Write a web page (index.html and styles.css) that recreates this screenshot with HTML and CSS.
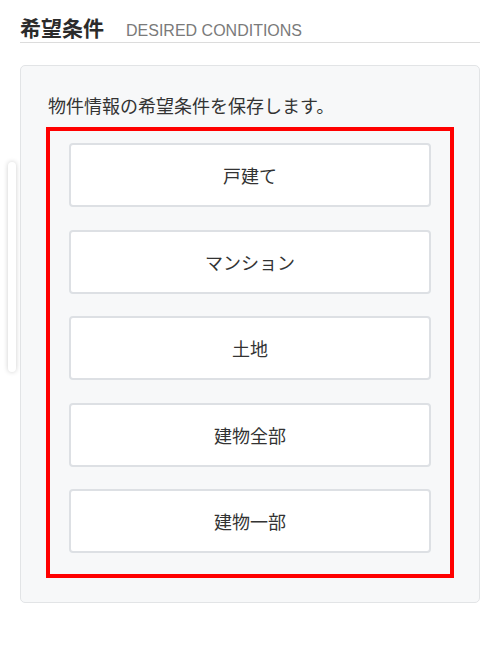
FILE: index.html
```html
<!DOCTYPE html>
<html lang="ja">

<head>
    <meta charset="UTF-8">
    <meta name="viewport" content="width=device-width, initial-scale=1.0">
    <title>希望条件</title>
    <link rel="stylesheet" href="styles.css">
</head>

<body>
    <h2 class="section-title">
        <span class="title-ja">希望条件</span>
        <span class="title-en">DESIRED CONDITIONS</span>
    </h2>

    <div class="card">
        <p class="card-text">物件情報の希望条件を保存します。</p>
        <div class="choice-list">
            <button class="choice">戸建て</button>
            <button class="choice">マンション</button>
            <button class="choice">土地</button>
            <button class="choice">建物全部</button>
            <button class="choice">建物一部</button>
        </div>
    </div>

    <div class="scroll-thumb"></div>
</body>

</html>
```

FILE: styles.css
```css
body {
    font-family: "Liberation Sans", "Noto Sans CJK JP", sans-serif;
    color: #333;
    background: #fff;
    margin: 0;
    padding: 16px 20px 0;
}

.section-title {
    display: flex;
    align-items: baseline;
    gap: 22px;
    height: 26px;
    margin: 0;
    border-bottom: 1px solid #dcdcdc;
    line-height: 26px;
}

.title-ja {
    font-size: 21px;
    font-weight: bold;
    color: #2b2b2b;
}

.title-en {
    font-size: 16px;
    font-weight: normal;
    color: #7a7a7a;
}

.card {
    margin-top: 22px;
    padding: 29px 25px 24px;
    background: #f7f8f9;
    border: 1px solid #e2e4e6;
    border-radius: 5px;
}

.card-text {
    margin: 0 0 8px;
    padding-left: 2px;
    font-size: 18px;
    line-height: 24px;
}

.choice-list {
    display: flex;
    flex-direction: column;
    gap: 22.5px;
    padding: 12px 19px 21px;
    border: 4px solid #ff0000;
}

.choice {
    height: 64px;
    font-family: inherit;
    font-size: 18px;
    color: #333;
    background: #fff;
    border: 2px solid #dde0e4;
    border-radius: 4px;
}

.scroll-thumb {
    position: absolute;
    left: 8px;
    top: 162px;
    width: 8px;
    height: 210px;
    background: #fff;
    border-radius: 4px;
    box-shadow: 0 0 5px rgba(0, 0, 0, 0.2);
}
```
